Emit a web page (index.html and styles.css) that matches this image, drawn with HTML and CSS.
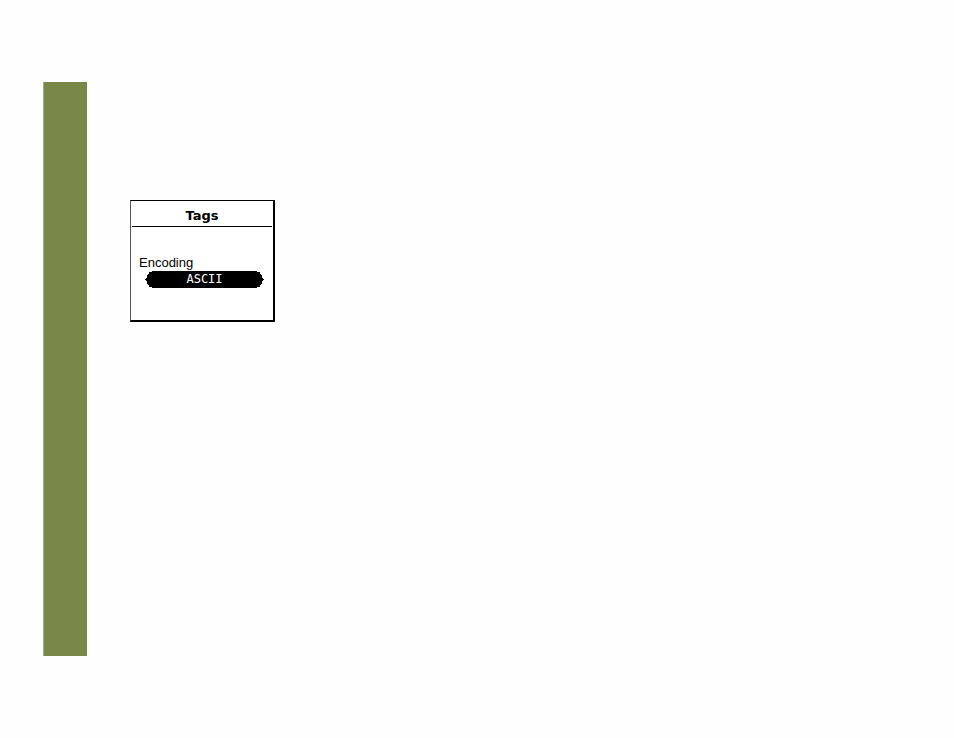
FILE: index.html
```html
<!DOCTYPE html>
<html lang="en">
<head>
<meta charset="utf-8">
<meta name="viewport" content="width=device-width, initial-scale=1">
<title>Tags</title>
<link rel="stylesheet" href="styles.css">
</head>
<body>
<div class="page">
  <aside class="band"></aside>
  <main class="content">
    <section class="screen">
      <h1 class="title">Tags</h1>
      <form class="field">
        <label class="label" for="encoding">Encoding</label>
        <select class="pill" id="encoding">
          <option>ASCII</option>
        </select>
      </form>
    </section>
  </main>
</div>
</body>
</html>
```
FILE: styles.css
```css
* {
  box-sizing: border-box;
}

body {
  margin: 0;
  background: #fefefe;
  color: #000;
  font-family: "Liberation Sans", Arial, sans-serif;
}

.page {
  display: flex;
  gap: 43px;
  min-height: 100vh;
  padding: 82px 43px;
}

.band {
  flex: 0 0 44px;
  background: #798748;
  border-left: 1px solid #a3ad80;
}

.content {
  flex: 1;
  padding-top: 118px;
}

.screen {
  width: 145px;
  padding: 0 1px 32px;
  background: #fff;
  border: solid #000;
  border-width: 1px 2px 2px 1px;
  border-left-color: #555;
}

.title {
  margin: 0;
  padding-top: 4px;
  border-bottom: 1px solid #000;
  font-family: "DejaVu Sans", sans-serif;
  font-size: 13px;
  font-weight: 700;
  line-height: 21px;
  text-align: center;
}

.field {
  display: flex;
  flex-direction: column;
  margin: 0;
  padding: 27px 8px 0 7px;
}

.label {
  font-size: 13px;
  line-height: 17px;
}

/* Stepped ends that taper to a one-pixel point */
.pill {
  appearance: none;
  height: 17px;
  margin: 0 0 0 6px;
  padding: 0;
  border: 0;
  border-radius: 0;
  background: #000;
  color: #fff;
  font-family: "DejaVu Sans Mono", monospace;
  font-size: 12px;
  line-height: 17px;
  text-align: center;
  text-align-last: center;
  clip-path: polygon(
    7px 0, calc(100% - 7px) 0,
    calc(100% - 7px) 1px, calc(100% - 4px) 1px,
    calc(100% - 4px) 3px, calc(100% - 3px) 3px,
    calc(100% - 3px) 4px, calc(100% - 2px) 4px,
    calc(100% - 2px) 7px, calc(100% - 1px) 7px,
    calc(100% - 1px) 8px, 100% 8px,
    100% 9px, calc(100% - 1px) 9px,
    calc(100% - 1px) 10px, calc(100% - 2px) 10px,
    calc(100% - 2px) 13px, calc(100% - 3px) 13px,
    calc(100% - 3px) 14px, calc(100% - 4px) 14px,
    calc(100% - 4px) 16px, calc(100% - 7px) 16px,
    calc(100% - 7px) 100%, 7px 100%,
    7px 16px, 4px 16px,
    4px 14px, 3px 14px,
    3px 13px, 2px 13px,
    2px 10px, 1px 10px,
    1px 9px, 0 9px,
    0 8px, 1px 8px,
    1px 7px, 2px 7px,
    2px 4px, 3px 4px,
    3px 3px, 4px 3px,
    4px 1px, 7px 1px
  );
}
```
